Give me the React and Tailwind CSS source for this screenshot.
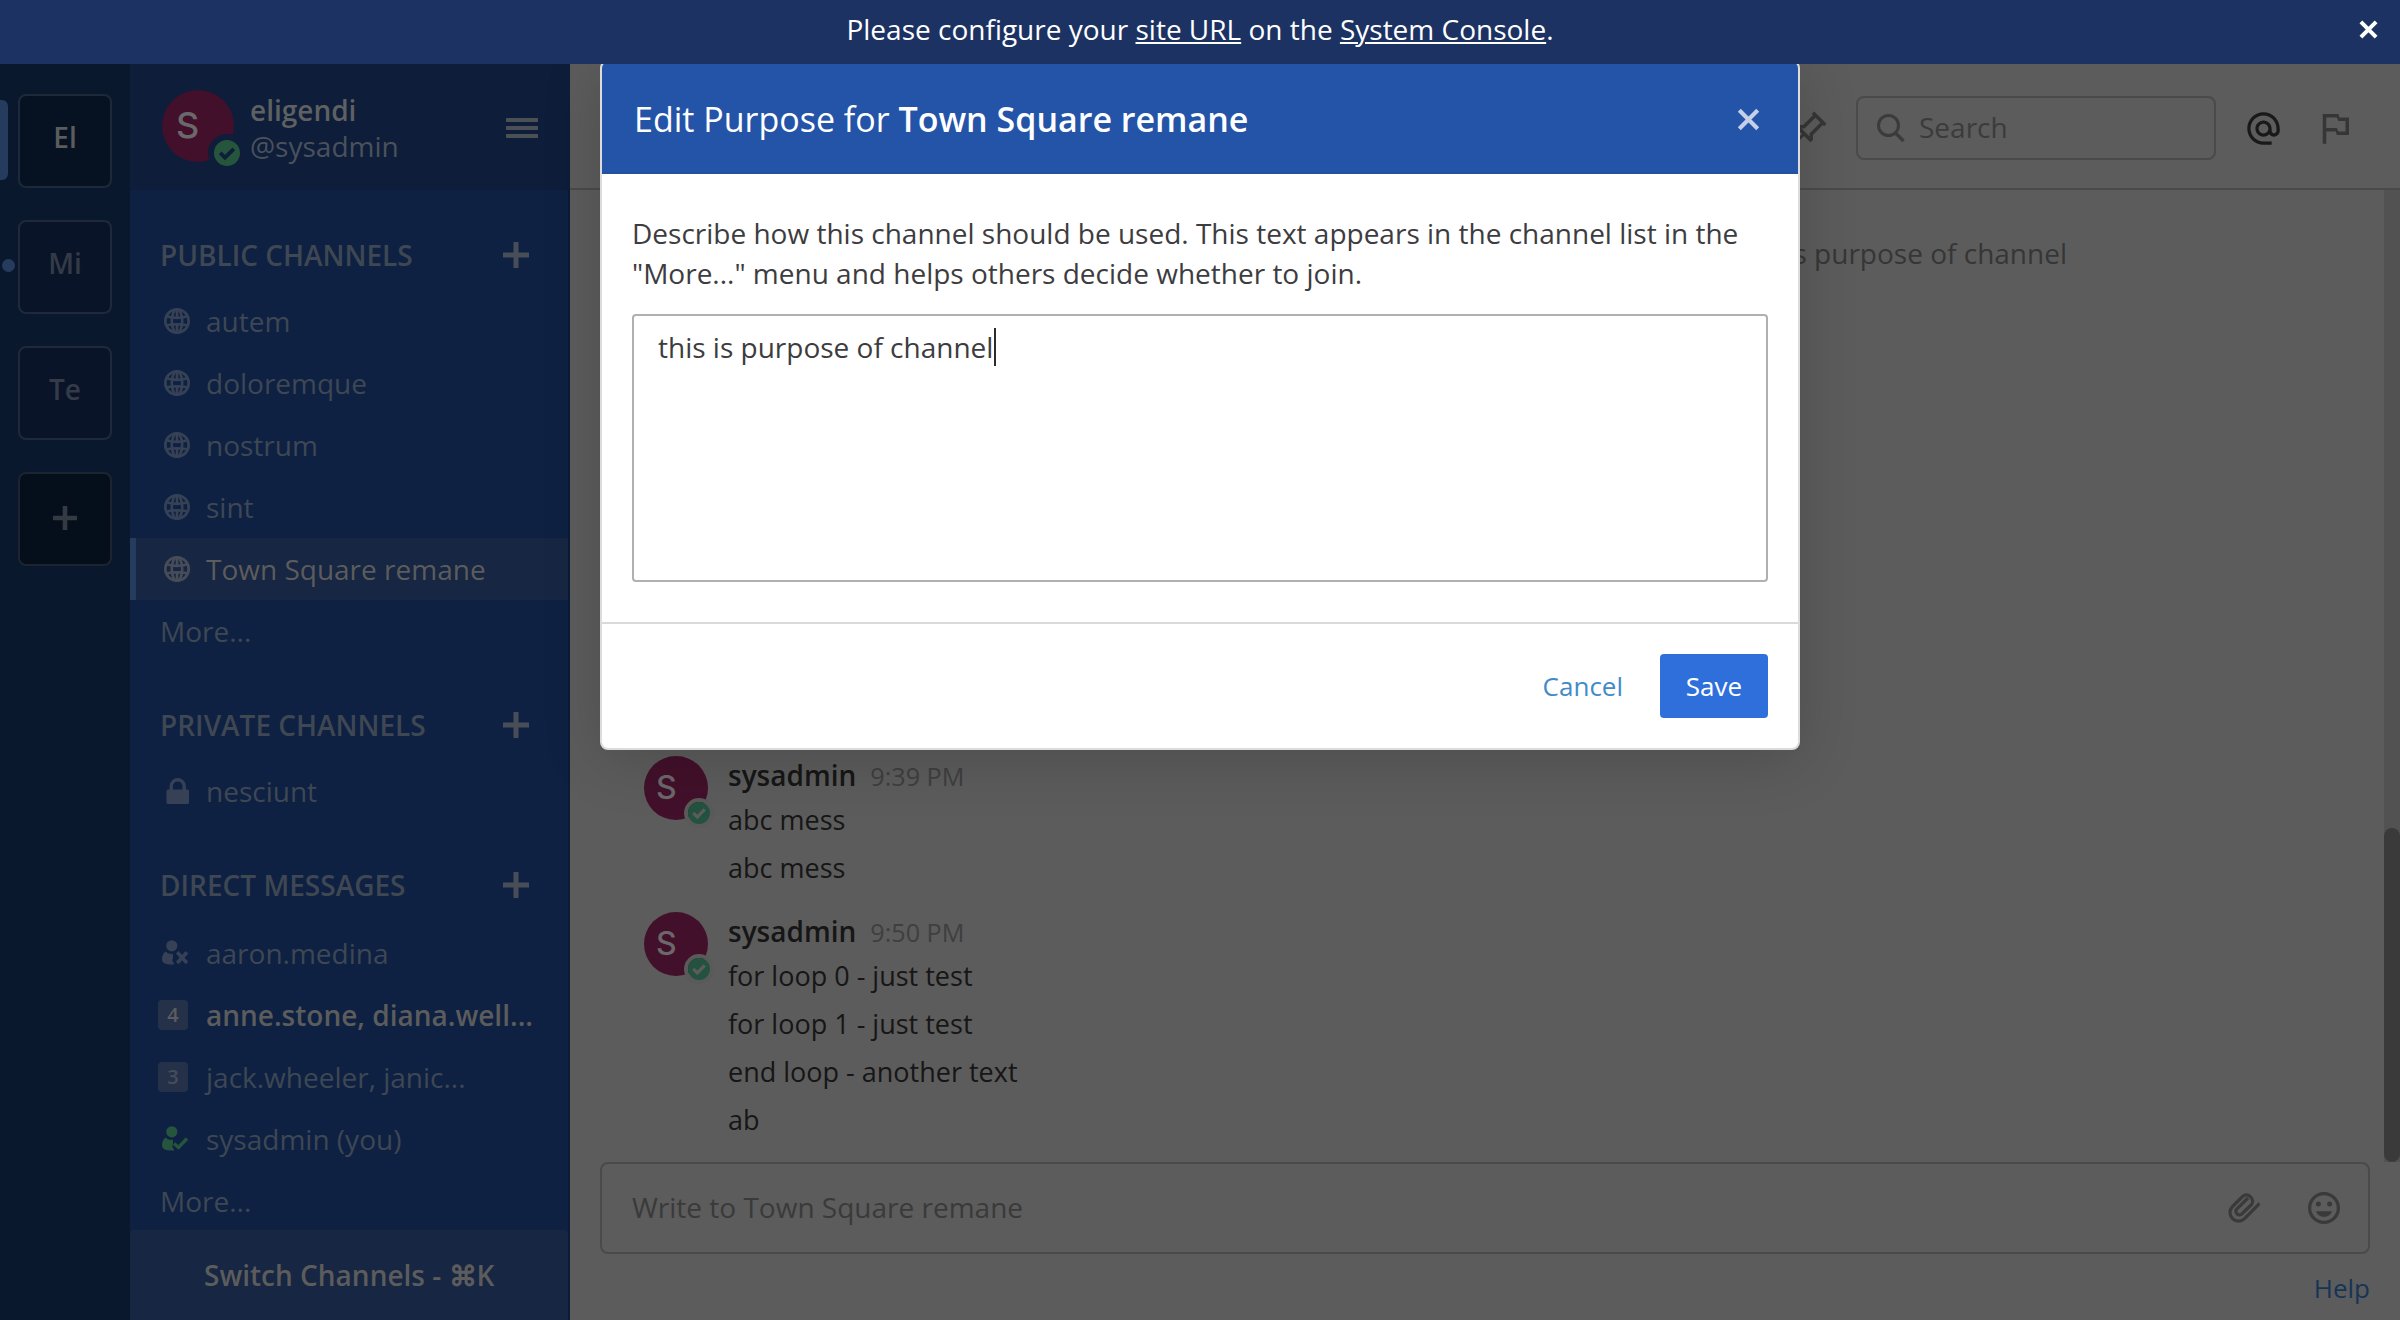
import React from "react";
import { MdAlternateEmail } from "react-icons/md";

function Cross({ size, stroke, className }) {
  return (
    <svg width={size} height={size} viewBox="0 0 20 20" fill="none" stroke="currentColor" strokeWidth={stroke} className={className}>
      <path d="M2 2L18 18M18 2L2 18" />
    </svg>
  );
}

function PlusIcon() {
  return (
    <svg width="26" height="26" viewBox="0 0 26 26" fill="currentColor">
      <path d="M10.5 0h5v10.5H26v5H15.5V26h-5V15.5H0v-5h10.5z" />
    </svg>
  );
}

function Globe() {
  return (
    <svg width="26" height="26" viewBox="0 0 26 26" fill="none" stroke="currentColor" strokeWidth="2.6">
      <circle cx="13" cy="13" r="11.7" />
      <ellipse cx="13" cy="13" rx="5.2" ry="11.7" />
      <path d="M2.5 8.2Q13 11.6 23.5 8.2M2 17.6Q13 15 24 17.6M13 1v9M13 16v9" />
    </svg>
  );
}

function Lock() {
  return (
    <svg width="26" height="26" viewBox="0 0 26 26" fill="none">
      <rect x="2.5" y="11.5" width="22.5" height="14.5" rx="1.5" fill="currentColor" />
      <path d="M7.2 12V8.2a6.5 6.5 0 0 1 13 0V12" stroke="currentColor" strokeWidth="3.4" />
    </svg>
  );
}

function Person({ online }) {
  return (
    <svg width="28" height="26" viewBox="0 0 28 26" fill="none" className={online ? "text-[#25553c]" : ""}>
      <circle cx="9.8" cy="5.8" r="5.6" fill="currentColor" />
      <path d="M3.8 11.5C6.5 14.2 9 14 11 13.7V18.5L10.2 20.2L12.3 24.5C6 25 0 23.8 0 19.5C0 15.5 1.4 12.8 3.8 11.5Z" fill="currentColor" />
      {online ? (
        <path d="M12 17.5L16.5 21.5L25 12.5" stroke="currentColor" strokeWidth="3.4" />
      ) : (
        <path d="M15.2 12.2L25 23M25 12.2L15.2 23" stroke="currentColor" strokeWidth="3.6" />
      )}
    </svg>
  );
}

function Status({ size, color, mark }) {
  return (
    <svg width={size} height={size} viewBox="0 0 26 26" fill="none">
      <circle cx="13" cy="13" r="13" fill={color} />
      <path d="M6.2 12.8L11 17.6L19.8 8.8" stroke={mark} strokeWidth="3.8" />
    </svg>
  );
}

function PinIcon() {
  return (
    <svg width="42" height="42" viewBox="0 0 24 24" fill="currentColor" className="rotate-45">
      <path d="M16,12V4H17V2H7V4H8V12L6,14V16H11.2V22H12.8V16H18V14L16,12M8.8,14L10,12.8V4H14V12.8L15.2,14H8.8Z" />
    </svg>
  );
}

function FlagIcon() {
  return (
    <svg width="42" height="42" viewBox="0 0 24 24" fill="currentColor">
      <path d="M14.5,6H20V16H13L12.5,14H7V21H5V4H14L14.5,6M7,6V12H13L14,14H18V8H14L13,6H7Z" />
    </svg>
  );
}

function SearchIcon() {
  return (
    <svg width="28" height="28" viewBox="0 0 28 28" fill="none" stroke="currentColor" strokeWidth="3">
      <circle cx="11.5" cy="11.5" r="10" />
      <path d="M18.5 19L26.5 27" strokeWidth="3.4" />
    </svg>
  );
}

function Paperclip() {
  return (
    <svg width="32" height="32" viewBox="0 0 32 32" fill="none" stroke="currentColor" strokeWidth="3.2">
      <path d="M31.6 11.4L16.6 26.6A8.5 8.5 0 0 1 4.5 14.5L15 4A6.2 6.2 0 0 1 23.6 12.4L13.6 22.2A3.6 3.6 0 0 1 8.6 17.2L20 6" />
    </svg>
  );
}

function Smile() {
  return (
    <svg width="32" height="32" viewBox="0 0 32 32" fill="currentColor">
      <circle cx="16" cy="16" r="14.4" fill="none" stroke="currentColor" strokeWidth="3.2" />
      <circle cx="10.4" cy="12" r="2.5" />
      <circle cx="21.6" cy="12" r="2.5" />
      <path d="M8 19.2H24C22.8 22.8 19.7 24.8 16 24.8S9.2 22.8 8 19.2Z" />
    </svg>
  );
}

function TeamButton({ className, children }) {
  return (
    <div className={`flex h-[94px] w-[94px] items-center justify-center rounded-lg border-2 text-[28px] leading-none font-semibold ${className}`}>
      <span className="pb-2">{children}</span>
    </div>
  );
}

function TeamBar() {
  return (
    <aside className="relative flex w-[130px] shrink-0 flex-col items-center gap-8 bg-[#0a182d] pt-[30px]">
      <span className="absolute top-[36px] left-0 h-20 w-2 rounded-r-md bg-[#253c5e]" />
      <span className="absolute top-[195px] left-[2px] h-[13px] w-[13px] rounded-full bg-[#253c5e]" />
      <TeamButton className="border-[#1d2939] bg-[#061222] text-[#5c5c5c]">El</TeamButton>
      <TeamButton className="border-[#1f293b] bg-[#091429] text-[#343b47]">Mi</TeamButton>
      <TeamButton className="border-[#1f293b] bg-[#091429] text-[#343b47]">Te</TeamButton>
      <div className="flex h-[94px] w-[94px] items-center justify-center rounded-lg border-2 border-[#1d242f] bg-[#050e1b] pb-0.5 text-[#353a42]">
        <svg width="24" height="24" viewBox="0 0 24 24" fill="currentColor">
          <path d="M9.7 0h4.6v9.7H24v4.6h-9.7V24H9.7V14.3H0V9.7h9.7z" />
        </svg>
      </div>
    </aside>
  );
}

function SectionTitle({ children, className }) {
  return (
    <div className={`flex h-[70px] items-center justify-between pr-[39px] pl-[30px] font-semibold text-[#3f4753] ${className}`}>
      <span>{children}</span>
      <span className="text-[#484e57]"><PlusIcon /></span>
    </div>
  );
}

function Row({ icon, children, active, bold }) {
  return (
    <div className={`flex h-[62px] w-[438px] items-center border-l-[6px] ${active ? "border-[#253c5e] bg-[#172642] text-[#5c5c5c]" : "border-transparent text-[#3e4754]"}`}>
      {icon && <span className={`flex w-[70px] shrink-0 items-center pb-px ${active ? "text-[#474d58]" : "text-[#364155]"}`}>{icon}</span>}
      <span className={`${icon ? "" : "pl-6"} ${bold ? "font-semibold text-[#5c5c5c]" : ""}`}>{children}</span>
    </div>
  );
}

function Inset({ children }) {
  return <span className="pl-7">{children}</span>;
}

function Badge({ n, bright }) {
  return (
    <span className={`ml-[22px] flex h-[30px] w-[30px] shrink-0 items-center justify-center rounded bg-[#253149] text-[20px] leading-none font-semibold ${bright ? "text-[#5b5c5e]" : "text-[#454d59]"}`}>{n}</span>
  );
}

function Sidebar() {
  return (
    <aside className="flex w-[440px] shrink-0 flex-col bg-[#0e2142]">
      <header className="flex h-[126px] shrink-0 items-center bg-[#0d1d3a] pr-8 pl-8">
        <div className="relative -mt-0.5 h-[72px] w-[72px] rounded-full bg-[#42102a]">
          <span className="absolute top-[17px] left-[14px] font-['Inter'] text-[36px] leading-none font-medium text-[#6a686a]">S</span>
          <span className="absolute top-[44px] left-[46px] rounded-full border-[6px] border-[#0d1d3a]">
            <Status size={26} color="#25553c" mark="#0d1d3a" />
          </span>
        </div>
        <div className="mt-px ml-4 leading-9">
          <div className="font-semibold text-[#5f6061]">eligendi</div>
          <div className="text-[#4b515a]">@sysadmin</div>
        </div>
        <svg width="32" height="20" viewBox="0 0 32 20" fill="#4b5054" className="mt-0.5 ml-auto">
          <rect width="32" height="4" rx="0.5" />
          <rect y="8" width="32" height="4" rx="0.5" />
          <rect y="16" width="32" height="4" rx="0.5" />
        </svg>
      </header>
      <div className="min-h-0 flex-1 overflow-hidden border-r-2 border-[#0b1b38]">
        <SectionTitle className="mt-[30px]">PUBLIC CHANNELS</SectionTitle>
        <Row icon={<Inset><Globe /></Inset>}>autem</Row>
        <Row icon={<Inset><Globe /></Inset>}>doloremque</Row>
        <Row icon={<Inset><Globe /></Inset>}>nostrum</Row>
        <Row icon={<Inset><Globe /></Inset>}>sint</Row>
        <Row icon={<Inset><Globe /></Inset>} active>Town Square remane</Row>
        <Row>More...</Row>
        <SectionTitle className="mt-7">PRIVATE CHANNELS</SectionTitle>
        <Row icon={<Inset><Lock /></Inset>}>nesciunt</Row>
        <SectionTitle className="mt-7 mb-0.5">DIRECT MESSAGES</SectionTitle>
        <Row icon={<span className="pl-[26px]"><Person /></span>}>aaron.medina</Row>
        <Row icon={<Badge n="4" bright />} bold>anne.stone, diana.well...</Row>
        <Row icon={<Badge n="3" />}>jack.wheeler, janic...</Row>
        <Row icon={<span className="pl-[26px]"><Person online /></span>}>sysadmin (you)</Row>
        <Row>More...</Row>
      </div>
      <footer className="flex h-[90px] shrink-0 items-center border-r-2 border-[#0b1b38]">
        <div className="flex h-full w-full items-center rounded-t bg-[#172643] pl-[74px] font-semibold text-[#5c5c5c]">
          <span>Switch Channels - ⌘K</span>
        </div>
      </footer>
    </aside>
  );
}

function ChannelHeader() {
  return (
    <header className="flex h-[126px] shrink-0 items-center justify-end border-b-2 border-[#4a4a4a] pt-1 pr-11 text-[#363636]">
      <div className="mr-[27px] pt-[3px]"><PinIcon /></div>
      <div className="flex h-16 w-[360px] items-center rounded-lg border-2 border-[#4a4a4a] pl-[19px] text-[#3b3b3b]">
        <span><SearchIcon /></span>
        <span className="ml-[14px] pb-0.5">Search</span>
      </div>
      <MdAlternateEmail className="ml-[28px] text-[#191919]" size={39} />
      <div className="ml-[31px]"><FlagIcon /></div>
    </header>
  );
}

function Post({ time, lines, className }) {
  return (
    <article className={`flex pl-[74px] ${className}`}>
      <div className="relative mt-px h-16 w-16 shrink-0 rounded-full bg-[#42102a]">
        <span className="absolute top-[16px] left-[12px] font-['Inter'] text-[32px] leading-none font-medium text-[#6a686a]">S</span>
        <span className="absolute top-[42px] left-[40px] rounded-full border-4 border-[#5a5a5a]">
          <Status size={22} color="#245240" mark="#5c5c5c" />
        </span>
      </div>
      <div className="ml-5">
        <div className="flex h-[41px] items-baseline leading-10">
          <span className="font-semibold text-[#161616]">sysadmin</span>
          <span className="ml-[14px] text-[25.2px] text-[#3f3f3f]">{time}</span>
        </div>
        {lines.map((line, i) => (
          <p key={i} className="text-[27px] leading-[48px] text-[#161616]">{line}</p>
        ))}
      </div>
    </article>
  );
}

function ChannelView() {
  return (
    <main className="flex min-w-0 flex-1 flex-col bg-[#5c5c5c]">
      <ChannelHeader />
      <section className="flex h-[972px] shrink-0">
        <div className="flex flex-1 flex-col pb-[18px]">
          <p className="mt-[43px] mb-auto pr-[317px] text-right leading-10 text-[#363636]">this is purpose of channel</p>
          <Post time="9:39 PM" lines={["abc mess", "abc mess"]} />
          <Post time="9:50 PM" lines={["for loop 0 - just test", "for loop 1 - just test", "end loop - another text", "ab"]} className="mt-[19px]" />
        </div>
        <div className="flex w-4 flex-col justify-end bg-[#525252]">
          <div className="h-[334px] rounded-full bg-[#3a3a3a]" />
        </div>
      </section>
      <div className="mx-[30px] flex h-[92px] shrink-0 items-center rounded-lg border-2 border-[#4a4a4a] pr-7 pl-[30px] text-[#3a3a3a]">
        <span className="pb-0.5">Write to Town Square remane</span>
        <span className="ml-auto"><Paperclip /></span>
        <span className="ml-12"><Smile /></span>
      </div>
      <div className="mt-[14px] pr-[30px] text-right text-[26px] leading-10 text-[#163456]">Help</div>
    </main>
  );
}

function PurposeModal() {
  return (
    <div className="absolute top-[60px] left-[600px] w-[1200px] rounded-lg border-2 border-[#dcdcdc] bg-white shadow-[0_10px_60px_rgba(0,0,0,0.16)]">
      <div className="flex h-[112px] items-center justify-between rounded-t-md border-b-2 border-[#2450a0] bg-[#2454a8] pt-1 pr-[38px] pl-8 text-[34px] text-white">
        <h1>Edit Purpose for <span className="font-semibold">Town Square remane</span></h1>
        <Cross size={23} stroke={3.6} className="text-[#c5d0e8]" />
      </div>
      <div className="px-[30px] pt-[39px] pb-10 text-[#3d3c40]">
        <p className="leading-10">Describe how this channel should be used. This text appears in the channel list in the<br />"More..." menu and helps others decide whether to join.</p>
        <div className="mt-[21px] flex h-[268px] items-start rounded border-2 border-[#b0b0b0] pt-[11px] pl-6 leading-10">
          <span>this is purpose of channel</span>
          <span className="mt-px ml-px h-[38px] w-0.5 bg-[#2c2b2f]" />
        </div>
      </div>
      <div className="flex h-[126px] items-center justify-end border-t-2 border-[#dadada] px-[30px] text-[26px]">
        <span className="mr-[37px] pt-px text-[#428bca]">Cancel</span>
        <span className="flex h-16 w-[108px] items-center justify-center rounded bg-[#2f6fdb] pt-px text-white">Save</span>
      </div>
    </div>
  );
}

export default function App() {
  return (
    <div className="relative flex h-[1320px] w-[2400px] flex-col overflow-hidden font-['Open_Sans','Noto_Sans',sans-serif] text-[28px] leading-[1.36]">
      <div className="z-10 flex h-16 shrink-0 items-center bg-[#1c3263] pr-[22px] pb-[6px] text-white">
        <p className="flex-1 pl-[41px] text-center">
          Please configure your <a className="underline decoration-2 underline-offset-2">site URL</a> on the <a className="underline decoration-2 underline-offset-2">System Console</a>.
        </p>
        <Cross size={19} stroke={4.2} />
      </div>
      <div className="flex min-h-0 flex-1">
        <TeamBar />
        <Sidebar />
        <ChannelView />
      </div>
      <PurposeModal />
    </div>
  );
}
